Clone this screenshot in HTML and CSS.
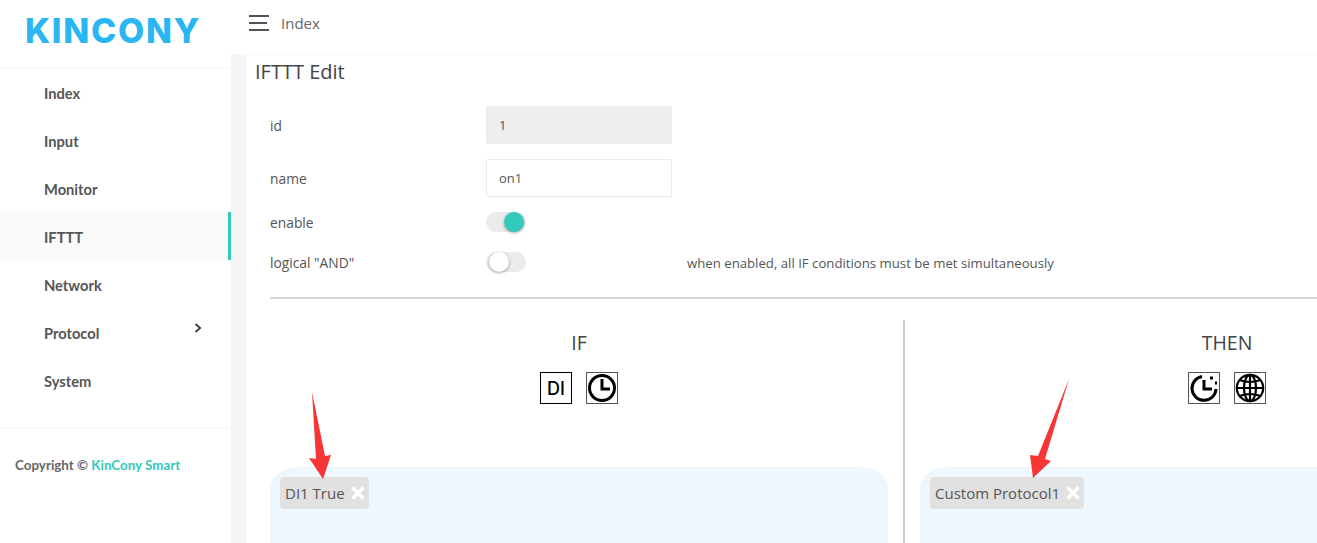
FILE: index.html
```html
<!DOCTYPE html>
<html lang="en">
<head>
    <meta charset="UTF-8">
    <title>IFTTT Edit</title>
    <link rel="stylesheet" href="styles.css">
</head>
<body>
    <div class="app">
        <aside class="sidebar">
            <div class="logo"><span class="logo-text">KINCONY</span></div>
            <nav class="nav">
                <a class="nav-item">Index</a>
                <a class="nav-item">Input</a>
                <a class="nav-item">Monitor</a>
                <a class="nav-item active">IFTTT</a>
                <a class="nav-item">Network</a>
                <a class="nav-item">Protocol
                    <svg class="chevron" width="8" height="10" viewBox="0 0 8 10"><path d="M1.5 1 L6 5 L1.5 9" fill="none" stroke="#444" stroke-width="2"/></svg>
                </a>
                <a class="nav-item">System</a>
            </nav>
            <div class="copyright">Copyright &copy; <span class="brand">KinCony Smart</span></div>
        </aside>

        <div class="main">
            <header class="topbar">
                <div class="burger"><span></span><span class="short"></span><span></span></div>
                <span class="crumb">Index</span>
            </header>
            <div class="content">
                <h1 class="title">IFTTT Edit</h1>
                <div class="form">
                    <div class="row row-id">
                        <label class="label">id</label>
                        <div class="input disabled">1</div>
                    </div>
                    <div class="row row-name">
                        <label class="label">name</label>
                        <div class="input">on1</div>
                    </div>
                    <div class="row row-enable">
                        <label class="label">enable</label>
                        <div class="switch on"><i></i></div>
                    </div>
                    <div class="row row-and">
                        <label class="label">logical "AND"</label>
                        <div class="switch"><i></i></div>
                        <span class="hint">when enabled, all IF conditions must be met simultaneously</span>
                    </div>
                </div>
                <hr class="rule">
                <div class="columns">
                    <section class="col col-if">
                        <h2 class="col-title">IF</h2>
                        <div class="tools">
                            <div class="tool tool-di">DI</div>
                            <div class="tool">
                                <svg width="30" height="30" viewBox="0 0 30 30" fill="none" stroke="#000" stroke-width="3">
                                    <circle cx="15" cy="15" r="12.5"/>
                                    <path d="M15 6 V16 H23"/>
                                </svg>
                            </div>
                        </div>
                        <div class="panel">
                            <span class="tag">DI1 True <svg class="close" width="16" height="16" viewBox="0 0 16 16"><path d="M2.5 2.5 L13.5 13.5 M13.5 2.5 L2.5 13.5" stroke="#fff" stroke-width="3.4"/></svg></span>
                        </div>
                    </section>
                    <section class="col col-then">
                        <h2 class="col-title">THEN</h2>
                        <div class="tools">
                            <div class="tool">
                                <svg width="30" height="30" viewBox="0 0 30 30" fill="none" stroke="#000" stroke-width="3">
                                    <path d="M13 3.5 A12 12 0 1 0 27 16"/>
                                    <path d="M15 7 V16 H23"/>
                                    <path d="M21 5 h3 M26 10 h2"/>
                                </svg>
                            </div>
                            <div class="tool">
                                <svg width="30" height="30" viewBox="0 0 30 30" fill="none" stroke="#000" stroke-width="2.2">
                                    <circle cx="15" cy="15" r="13.2"/>
                                    <ellipse cx="15" cy="15" rx="6" ry="13.2"/>
                                    <path d="M15 2 V28 M2 15 H28 M4.5 7 Q15 11 25.5 7 M4.5 23 Q15 19 25.5 23"/>
                                </svg>
                            </div>
                        </div>
                        <div class="panel">
                            <span class="tag">Custom Protocol1 <svg class="close" width="16" height="16" viewBox="0 0 16 16"><path d="M2.5 2.5 L13.5 13.5 M13.5 2.5 L2.5 13.5" stroke="#fff" stroke-width="3.4"/></svg></span>
                        </div>
                    </section>
                </div>
            </div>
        </div>
    </div>

    <!-- red arrows drawn on top of the screenshot -->
    <svg class="arrows" width="1317" height="543" viewBox="0 0 1317 543">
        <polygon points="312,392 316,459 309,458 323,479 331,455 325,456" fill="#f83535"/>
        <polygon points="1069,379 1038,456 1030,455 1033,478 1051,461 1045,459" fill="#f83535"/>
    </svg>
</body>
</html>
```
FILE: styles.css
```css
html, body {
    margin: 0;
    height: 100%;
    overflow: hidden;
}
body {
    font-family: "Open Sans", "Noto Sans", sans-serif;
    font-size: 13px;
    color: #555;
    background-color: #fff;
}
.app {
    display: flex;
    width: 1317px;
    height: 543px;
    overflow: hidden;
}

/* sidebar */
.sidebar {
    flex: 0 0 231px;
    background-color: #fff;
}
.logo {
    height: 68px;
    box-sizing: border-box;
    border-bottom: 1px solid #f7f7f7;
    padding: 9px 0 0 25px;
}
.logo-text {
    font-family: Inter, Lato, sans-serif;
    font-weight: 800;
    font-size: 34px;
    line-height: 44px;
    letter-spacing: 1.7px;
    color: #29b6f3;
}
.nav {
    border-bottom: 1px solid #f5f5f5;
    padding-bottom: 24px;
}
.nav-item {
    display: flex;
    height: 48px;
    align-items: center;
    padding-left: 44px;
    box-sizing: border-box;
    position: relative;
    font-family: Lato, sans-serif;
    font-weight: 700;
    font-size: 14.7px;
    line-height: 20px;
    padding-top: 1px;
    color: #555;
}
.nav-item.active {
    background-color: #fafafa;
    border-right: 3px solid #33cabb;
}
.chevron {
    position: absolute;
    left: 194px;
    top: 15px;
}
.copyright {
    padding: 28px 0 0 15px;
    font-family: Lato, sans-serif;
    font-weight: 700;
    font-size: 13.4px;
    color: #666;
}
.brand {
    color: #33cabb;
}

/* main area */
.main {
    flex: 1;
    min-width: 0;
    background-color: #f3f4f8;
}
.topbar {
    display: flex;
    align-items: center;
    height: 55px;
    box-sizing: border-box;
    background-color: #fff;
    border-bottom: 1px solid #f7f7f7;
    padding: 0 0 8px 18px;
}
.burger {
    display: flex;
    flex-direction: column;
    gap: 5px;
    width: 20px;
    margin-right: 12px;
    margin-top: -1px;
}
.burger span {
    display: block;
    height: 2px;
    background-color: #50535a;
}
.burger .short {
    width: 18px;
}
.crumb {
    font-size: 15px;
    color: #666;
}
.content {
    margin-left: 15px;
    width: 1400px;
    height: 488px;
    background-color: #fff;
    padding-left: 9px;
    box-sizing: border-box;
}
.title {
    margin: 0;
    padding-top: 5px;
    font-weight: 400;
    font-size: 20px;
    line-height: 24px;
    color: #444;
}

/* form */
.form {
    padding-left: 15px;
    padding-top: 22px;
}
.row {
    display: flex;
    align-items: center;
}
.row-name {
    margin-top: 15px;
}
.row-enable {
    margin-top: 15px;
}
.row-and {
    margin-top: 20px;
}
.label {
    flex: 0 0 216px;
    font-size: 13.8px;
    color: #555;
}
.input {
    width: 186px;
    height: 38px;
    box-sizing: border-box;
    border: 1px solid #ebebeb;
    border-radius: 2px;
    padding: 0 12px;
    line-height: 37px;
    font-size: 13px;
    color: #555;
}
.input.disabled {
    background-color: #eee;
}
.switch {
    position: relative;
    width: 40px;
    height: 20px;
    border-radius: 10px;
    background-color: #ebebeb;
}
.switch i {
    position: absolute;
    left: 3px;
    top: 0;
    width: 20px;
    height: 20px;
    border-radius: 50%;
    background-color: #fff;
    box-shadow: 0 1px 3px rgba(0, 0, 0, 0.35);
}
.switch.on i {
    left: 18px;
    background-color: #33cabb;
}
.hint {
    margin-left: 161px;
    font-size: 13.2px;
    color: #555;
    position: relative;
    top: 1px;
}
.rule {
    margin: 25px 0 0 15px;
    border: 0;
    border-top: 2px solid #d6d6d6;
}

/* IF / THEN columns */
.columns {
    display: flex;
    padding-left: 15px;
    margin-top: 21px;
}
.col-if {
    width: 618px;
    padding-right: 15px;
    border-right: 2px solid #ccc;
}
.col-then {
    width: 614px;
    padding-left: 15px;
}
.col-title {
    margin: 0;
    padding-top: 10px;
    font-weight: 400;
    font-size: 19.5px;
    line-height: 26px;
    text-align: center;
    color: #444;
}
.tools {
    display: flex;
    justify-content: center;
    gap: 14px;
    margin-top: 16px;
}
.tool {
    display: flex;
    align-items: center;
    justify-content: center;
    width: 32px;
    height: 32px;
    box-sizing: border-box;
    border: 1px solid #555;
}
.tool-di {
    border-color: #000;
    font-family: Inter, sans-serif;
    font-size: 18px;
    font-weight: 500;
    color: #000;
}
.panel {
    margin-top: 63px;
    height: 200px;
    padding: 10px;
    box-sizing: border-box;
    background-color: #eff7fe;
    border-radius: 30px 30px 0 0 / 20px 20px 0 0;
}
.tag {
    display: inline-flex;
    align-items: center;
    height: 32px;
    padding: 0 3px 0 5px;
    gap: 5px;
    border-radius: 4px;
    background-color: #e1e1e1;
    font-size: 15px;
    color: #555;
}
.close {
    flex: none;
}

.arrows {
    position: absolute;
    left: 0;
    top: 0;
    pointer-events: none;
}
```
